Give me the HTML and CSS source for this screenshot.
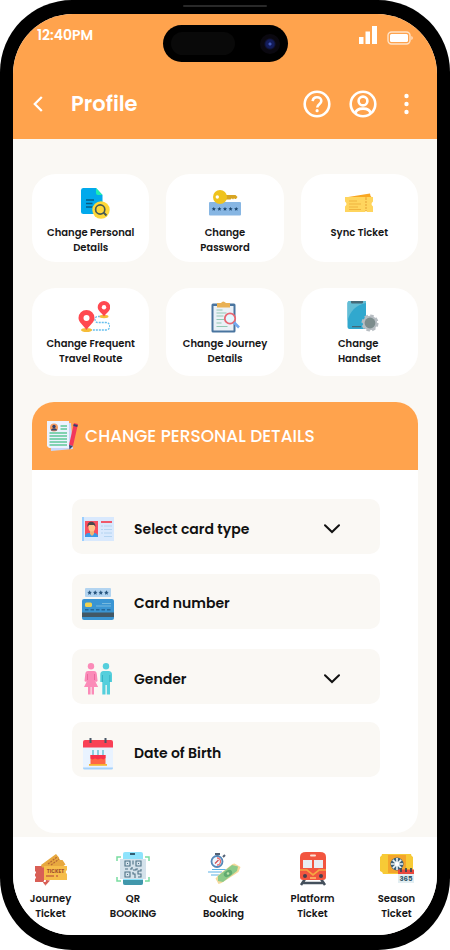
FILE: index.html
```html
<!DOCTYPE html>
<html lang="en">
<head>
<meta charset="utf-8">
<meta name="viewport" content="width=device-width, initial-scale=1">
<title>Profile</title>
<link rel="stylesheet" href="styles.css">
</head>
<body>
<div class="phone">
  <span class="speaker"></span>
  <div class="screen">
    <div class="island"><span class="sensor"></span><span class="lens"></span></div>
    <header class="header">
      <div class="status">
        <span class="time">12:40PM</span>
        <div class="signals">
          <svg width="18" height="19" viewBox="0 0 18 19" fill="#fff"><path d="M0 11h4.500v7H0zM6.500 5.500H11V18H6.500zM13 0h5v18h-5z"/></svg>
          <svg width="26" height="14" viewBox="0 0 26 14"><rect x="1" y="1" width="22" height="12" rx="3.500" fill="none" stroke="#ffe3c8" stroke-width="1.400"/><rect x="3" y="3" width="18" height="8" rx="1.500" fill="#fff"/><path d="M24.300 5v4q1.500-.6 1.500-2t-1.500-2z" fill="#ffe3c8"/></svg>
        </div>
      </div>
      <div class="appbar">
        <button class="icon-button" aria-label="Back"><svg width="10" height="16" viewBox="0 0 10 16" fill="none" stroke="#fff" stroke-width="2.300"><path d="M8.800 1 1.800 8l7 7"/></svg></button>
        <h1 class="title">Profile</h1>
        <div class="actions">
          <button class="icon-button" aria-label="Help"><svg width="28" height="28" viewBox="0 0 28 28" fill="none" stroke="#fff" stroke-width="2.600"><circle cx="14" cy="14" r="12.300"/><path d="M9.700 11.200c.2-2.400 1.900-3.900 4.300-3.900 2.500 0 4.300 1.500 4.300 3.700 0 3.200-4.100 3.200-4.100 6.600"/><circle cx="14.100" cy="20.700" r="1.600" fill="#fff" stroke="none"/></svg></button>
          <button class="icon-button" aria-label="Account"><svg width="28" height="28" viewBox="0 0 28 28" fill="none" stroke="#fff" stroke-width="2.600"><circle cx="14" cy="14" r="12.300"/><circle cx="14" cy="11" r="4.400"/><path d="M6.500 23.300c.4-3.400 3.300-4.700 7.500-4.700s7.100 1.300 7.500 4.700"/></svg></button>
          <button class="icon-button" aria-label="More"><svg width="5" height="22" viewBox="0 0 5 22" fill="#fff"><circle cx="2.500" cy="3" r="2.200"/><circle cx="2.500" cy="11" r="2.200"/><circle cx="2.500" cy="19" r="2.200"/></svg></button>
        </div>
      </div>
    </header>

    <main class="main">
      <div class="tiles">
        <button class="tile tile-shifted">
          <svg width="32" height="32" viewBox="0 0 32 32"><path d="M5 1h13l6.500 7v19H5.500Q3 27 3 24.500V3.500Q3 1 5 1z" fill="#02a9ec"/><path d="M18 1l6.500 7H20q-2 0-2-2z" fill="#20efb0"/><path d="M8 13h8M8 16.500h6.500M8 20h6.500" stroke="#065c87" stroke-width="1.300"/><circle cx="23" cy="23" r="8.700" fill="#ffd838"/><circle cx="22.200" cy="22.500" r="4.600" fill="none" stroke="#495b52" stroke-width="1.700"/><path d="M25.500 25.500l3 3" stroke="#495b52" stroke-width="2"/></svg>
          <span>Change Personal<br>Details</span>
        </button>
        <button class="tile">
          <svg width="32" height="32" viewBox="0 0 32 32"><rect y="15" width="32" height="13.500" rx="1" fill="#87b6e3"/><g fill="#1c4770"><path id="star" d="M4.800 19.800l.6 1.400 1.500.1-1.100 1 .3 1.500-1.300-.8-1.300.8.300-1.500-1.100-1 1.500-.1z"/><use href="#star" x="5.600"/><use href="#star" x="11.200"/><use href="#star" x="16.800"/><use href="#star" x="22.400"/></g><path d="M16 8h10.500l2 2-1.500 2h-1l-1-.8-1 1.300-1.200-1.300-1.200 1.300H16z" fill="#d8a522"/><circle cx="11" cy="10" r="7" fill="#efc31e"/><circle cx="8.300" cy="10" r="1.700" fill="#fff"/></svg>
          <span>Change<br>Password</span>
        </button>
        <button class="tile">
          <svg width="32" height="32" viewBox="0 0 32 32"><path d="M2 10.500l25-4q.2 2.500 1.500 3.500v3H3z" fill="#f9a722"/><path d="M2 10h20l1 1 1-1h6v4.500q-3 2.500 0 5V25h-6l-1-1-1 1H2v-5.500q3-2.500 0-5z" fill="#ffd55e"/><path d="M6 14h8M6 17h12M6 20h9M6 22.500h12" stroke="#f0b33e" stroke-width="1.200"/><path d="M23 11v13" stroke="#eaa83b" stroke-width="1.200" stroke-dasharray="2 1"/></svg>
          <span>Sync Ticket</span>
        </button>
        <button class="tile tile-tight tile-shifted">
          <svg width="32" height="32" viewBox="0 0 32 32"><path d="M25 15.500h-5c-4 0-4 6 0 6h8c5 0 5 7.500 0 7.500H12" fill="none" stroke="#65bfee" stroke-width="1.300" stroke-dasharray="2 1"/><ellipse cx="8.500" cy="29" rx="5.500" ry="2" fill="#f6bd38"/><ellipse cx="26" cy="15.500" rx="4.500" ry="1.700" fill="#f6bd38"/><path d="M8.500 29C5.500 24 .5 21.500.5 17a8 8 0 0 1 16 0c0 4.500-5 7-8 12z" fill="#ff4950"/><circle cx="8.500" cy="17" r="3" fill="#fff"/><path d="M26 15.500c-2-3.500-6.300-5.500-6.300-9.200a6.300 6.300 0 0 1 12.600 0c0 3.700-4.300 5.700-6.300 9.200z" fill="#ff4950"/><circle cx="26" cy="6.200" r="2.200" fill="#fff"/></svg>
          <span>Change Frequent<br>Travel Route</span>
        </button>
        <button class="tile tile-tight">
          <svg width="32" height="32" viewBox="0 0 32 32"><rect x="2.500" y="2.500" width="24" height="29" rx="1.500" fill="#49749f"/><path d="M4.500 5h20v24.500h-20z" fill="#eaf1f7"/><path d="M7.500 9h6M7.500 12h10M7.500 15h7M7.500 18.500h8M7.500 22h5M7.500 25.500h11" stroke="#91c8b3" stroke-width="1.200"/><path d="M8 2h4q2-3 5 0h4v4.500H8z" fill="#e9b155"/><circle cx="21" cy="17.500" r="5.200" fill="#e4f7ff" stroke="#e76772" stroke-width="1.800"/><path d="M25 21.500l5 5" stroke="#73a8ef" stroke-width="2.600"/></svg>
          <span>Change Journey<br>Details</span>
        </button>
        <button class="tile tile-tight tile-shifted">
          <svg width="32" height="32" viewBox="0 0 32 32"><rect x=".5" width="18.500" height="28" rx="2" fill="#31a8ce"/><path d="M.5 20V2q0-2 2-2H19v2C9 4 3 10 .5 20z" fill="#63bdd5"/><path d="M4 0h12v1.500q0 1-1 1H5q-1 0-1-1zM5 25h9v1.300H5z" fill="#456a78"/><circle cx="23" cy="22" r="7.300" fill="none" stroke="#b7bdc2" stroke-width="2.500" stroke-dasharray="3.500 2.230"/><circle cx="23" cy="22" r="7.300" fill="#b7bdc2"/><circle cx="23" cy="22" r="5.400" fill="#7c8c8c"/></svg>
          <span class="align-start">Change<br>Handset</span>
        </button>
      </div>

      <section class="panel">
        <div class="panel-head">
          <svg width="32" height="32" viewBox="0 0 32 32"><path d="M3 4l21-1 2 26-22 2z" fill="#c8d6f8"/><path d="M0 1h22v27H2l-2-2z" fill="#edf2ff"/><circle cx="7" cy="7.500" r="4" fill="#f49b63"/><path d="M4 10.500c0-3 6-3 6 0z" fill="#34426e"/><circle cx="7" cy="6.500" r="1.700" fill="#34426e"/><path d="M13.500 6H20M13.500 9H20M2.500 13H20M2.500 16H20M2.500 19H20M2.500 22H20M2.500 25H20" stroke="#5dc898" stroke-width="1.500"/><path d="M27 3l4 1-5 22-4-1z" fill="#f2375c"/><path d="M22 25l4 1-3.500 3.500z" fill="#34426e"/><path d="M26.500 5l4 1" stroke="#34426e" stroke-width="2"/></svg>
          <h2>CHANGE PERSONAL DETAILS</h2>
        </div>
        <form class="form">
          <div class="field">
            <svg width="32" height="32" viewBox="0 0 32 32"><path d="M0 4h32v24H0z" fill="#d9e9fd"/><path d="M0 4h2v24H0z" fill="#9bcfff"/><path d="M3 8h13v16H3z" fill="#f84e60"/><path d="M3 24q0-4 4-4h5q4 0 4 4z" fill="#379bea"/><path d="M8 16h4v5l-2 2-2-2z" fill="#f2b274"/><ellipse cx="9.800" cy="14" rx="3.400" ry="4.500" fill="#ffc58b"/><path d="M5.500 14c-1-7 8.500-7 8 0l-1.500-2H7z" fill="#4a474c"/><path d="M19 9h11" stroke="#ef596b" stroke-width="2"/><path d="M19 13h2m1 0h8M19 16.500h2m1 0h8M19 20h2m1 0h8M22 23.500h8" stroke="#b4d4f1"/></svg>
            <select class="control" aria-label="Select card type"><option>Select card type</option></select>
            <svg class="chevron" width="16" height="10" viewBox="0 0 16 10"><path d="M1 1.200l7 6.800 7-6.800"/></svg>
          </div>
          <div class="field">
            <svg width="32" height="32" viewBox="0 0 32 32"><rect x="3" y="0" width="26" height="9" rx="1" fill="#b3d4f0"/><g fill="#28557e"><path id="pinstar" d="M7.600 2.200l.7 1.500 1.600.2-1.200 1.100.3 1.700-1.400-.8-1.400.8.3-1.700-1.200-1.100 1.600-.2z"/><use href="#pinstar" x="5.600"/><use href="#pinstar" x="11.200"/><use href="#pinstar" x="16.800"/></g><rect y="11" width="32" height="21" rx="2" fill="#3a95d3"/><path d="M0 24.500h32v4.500H0z" fill="#425866"/><rect x="3" y="14.500" width="7" height="4.500" rx="1.500" fill="#f1d250"/><path d="M20 15.500h9M14 18h15" stroke="#76b9dd"/><path d="M3 21.700h26" stroke="#236798" stroke-width="1.500" stroke-dasharray="3.500 2"/></svg>
            <input class="control" type="text" aria-label="Card number" placeholder="Card number">
          </div>
          <div class="field">
            <svg width="32" height="32" viewBox="0 0 32 32"><g fill="#fb8bb8"><circle cx="9" cy="3.300" r="3.200"/><path d="M6 8h6q2.500 0 2.800 3l.8 7-1.500 1-1-1 3 6H12v7.500H9.600V24H8.600v7.500H6V24H2l3-6-1 1-1.500-1 .8-7Q3.500 8 6 8z"/></g><g fill="#55cfdc"><circle cx="24" cy="3.300" r="3.200"/><path d="M21.500 8h5q3.500 0 3.500 3.500V19h-2v12.500h-3.200V22h-1.300v9.500h-3.200V19h-2v-7.500Q18.300 8 21.500 8z"/></g><path d="M5.500 11v6M12.500 11v6" stroke="#e96b9e"/><path d="M20.500 12v7M27.800 12v7" stroke="#36b4c4"/></svg>
            <select class="control" aria-label="Gender"><option>Gender</option></select>
            <svg class="chevron" width="16" height="10" viewBox="0 0 16 10"><path d="M1 1.200l7 6.800 7-6.800"/></svg>
          </div>
          <div class="field field-low">
            <svg width="32" height="32" viewBox="0 0 32 32"><path d="M1 8h30v21q0 2-2 2H3q-2 0-2-2z" fill="#e9f3ff"/><path d="M1 29.500h30v.5q0 1.500-1.500 1.500h-27Q1 31.500 1 30z" fill="#a6d2fb"/><path d="M1 9.500V4q0-2 2-2h26q2 0 2 2v5.500z" fill="#f94056"/><path d="M8.500 0v5M23.500 0v5" stroke="#475565" stroke-width="2"/><path d="M11 12v5M16 12v5M21 12v5" stroke="#7cc8db" stroke-width="1.700"/><path d="M8.500 17h15v9h-15z" fill="#ff6745"/><path d="M8.500 17h15v3l-2 1.500-2.500-1-3 1-3-1-2.500 1-2-1z" fill="#f7314b"/><path d="M7 26h18v1.800H7z" fill="#f6b52f"/></svg>
            <input class="control" type="text" aria-label="Date of Birth" placeholder="Date of Birth">
          </div>
        </form>
      </section>
    </main>

    <nav class="nav">
      <a class="nav-item" href="#journey">
        <svg width="34" height="34" viewBox="0 0 34 34"><path d="M1 14h9v15l-1 1.500L11 33l3-3H1v-3q2-1.500 0-3v-2q2-1.500 0-3z" fill="#d95f56"/><path d="M7 13L22 2l3 3.500q0 3 3.500 2.500l3 4.500-4 3H8z" fill="#e7a83f"/><path d="M10 14h23v4q-2.500 2 0 4v6H10z" fill="#f6bd4a"/><path d="M12 28l-1 6 5-5.500z" fill="#d95f56"/><text x="21.500" y="20.500" class="ticket-word">TICKET</text><path d="M12 24h8M22 24h2" stroke="#c9683f" stroke-width="1.500"/><path d="M14 12l9-7M17 13l8-6" stroke="#b86a35" stroke-width="1.200" stroke-dasharray="2 1"/></svg>
        <span>Journey<br>Ticket</span>
      </a>
      <a class="nav-item" href="#qr">
        <svg width="34" height="34" viewBox="0 0 34 34"><rect x="7" y="0" width="20" height="33" rx="2" fill="#8ee3fc"/><path d="M7 28h20v3q0 2-2 2H9q-2 0-2-2z" fill="#4197ab"/><path d="M14 1h5v2h-5z" fill="#315d72"/><path d="M4 7h26v20H4z" fill="#d4e2eb"/><path d="M1 9V5h4M29 5h4v4M33 25v4h-4M5 29H1v-4" fill="none" stroke="#79dda0" stroke-width="1.500"/><path d="M9 9h5v5H9zM20 9h5v5h-5zM9 20h5v5H9zM17 8.500v4M9 17h3M14 17h2v-2M17 20v2h2v4M17 18h3v-1h2M25 17v2h-3v3h3v3h-3" fill="none" stroke="#4c7185" stroke-width="1.100"/><path d="M11 11h1v1h-1zM22 11h1v1h-1zM11 22h1v1h-1z" fill="#4c7185"/></svg>
        <span>QR<br>BOOKING</span>
      </a>
      <a class="nav-item" href="#quick">
        <svg width="34" height="34" viewBox="0 0 34 34"><path d="M8 2h5M10.500 2v4M16 5l2-2" stroke="#536174" stroke-width="2"/><circle cx="10" cy="9.500" r="5.500" fill="#eff8ff" stroke="#5688b9" stroke-width="1.800"/><path d="M10 6a3.500 3.500 0 0 1 0 7" fill="none" stroke="#ef6a68" stroke-width="1.300"/><path d="M8 11.500l3.500-3.500" stroke="#d44d53" stroke-width="1.300"/><path d="M5 17.500h15M1 20h14M4 23h8" stroke="#5db2e5" stroke-width="1.200"/><path d="M8.500 26.500l3 5.500 3-1 17-11 2-5-6-3.500-2 .5-14 11z" fill="#f5d99a"/><path d="M11 24l14-11 6 1.500-1 4.500-14 11-5-1z" fill="#8cca89"/><ellipse cx="21" cy="21.500" rx="4.500" ry="3" transform="rotate(-30 21 21.500)" fill="#62ab71"/><circle cx="21" cy="21.500" r="1.300" fill="#bde2a9"/></svg>
        <span>Quick<br>Booking</span>
      </a>
      <a class="nav-item" href="#platform">
        <svg width="34" height="34" viewBox="0 0 34 34"><path d="M9 27l-4 6M25 27l4 6M7 31h20" stroke="#44505c" stroke-width="2.500"/><path d="M4 5q0-5 6-5h14q6 0 6 5v20q0 3-3 3H7q-3 0-3-3z" fill="#f2553f"/><rect x="14" y="2.500" width="6" height="2" rx="1" fill="#fbe2d5"/><path d="M7 8h9v8H7zM18 8h9v8h-9z" fill="#e8edf2"/><path d="M4 18h7l6 5 6-5h7" fill="none" stroke="#f5a741" stroke-width="1.700"/><circle cx="9" cy="24" r="2" fill="#46404e"/><circle cx="25" cy="24" r="2" fill="#46404e"/><path d="M14 26h6" stroke="#ffc169" stroke-width="1.500"/></svg>
        <span>Platform<br>Ticket</span>
      </a>
      <a class="nav-item" href="#season">
        <svg width="34" height="34" viewBox="0 0 34 34"><path d="M2 2h29q0 2 2 3v14q-2 1-2 3H3q0-2-3-3V5q2-1 2-3z" fill="#f7ca36"/><path d="M8 3h18v18H8z" fill="#f4a52b"/><circle cx="17" cy="12" r="6.500" fill="#3d617b"/><path d="M17 6v12M11 12h12M12.800 7.800l8.400 8.400M21.200 7.800l-8.400 8.400" stroke="#e9f3f5" stroke-width="1.700"/><circle cx="17" cy="12" r="2" fill="#fff"/><path d="M18 21h16v10H18z" fill="#e2eef2"/><path d="M18 17.500h16V22H18z" fill="#e9483e"/><path d="M21 16v4M26 16v4M31 16v4" stroke="#354655" stroke-width="1.700"/><text x="26" y="29" class="days-word">365</text></svg>
        <span>Season<br>Ticket</span>
      </a>
    </nav>
  </div>
</div>
</body>
</html>
```
FILE: styles.css
```css
* { box-sizing: border-box; }

body {
  margin: 0;
  background: #fff;
  color: #161616;
  font-family: Poppins, Inter, "Open Sans", sans-serif;
}

button, input, select { font: inherit; color: inherit; }

.phone {
  position: relative;
  display: flex;
  min-height: 100vh;
  padding: 14px 13px 15px;
  background: #000;
  border-radius: 72px;
}

.speaker {
  position: absolute;
  top: 5px;
  left: 50%;
  width: 84px;
  height: 2px;
  margin-left: -42px;
  background: #292929;
  border-radius: 2px;
}

.screen {
  position: relative;
  display: flex;
  flex: 1;
  flex-direction: column;
  min-width: 0;
  overflow: hidden;
  background: #faf8f4;
  border-radius: 60px;
}

.island {
  position: absolute;
  top: 11px;
  left: 50%;
  display: flex;
  align-items: center;
  justify-content: space-between;
  width: 125px;
  height: 37px;
  margin-left: -62px;
  padding: 0 8px;
  background: #000;
  border-radius: 20px;
}

.sensor {
  width: 64px;
  height: 23px;
  background: #090909;
  border-radius: 12px;
}

.lens {
  width: 20px;
  height: 20px;
  background: radial-gradient(circle, #4058b8 0 1px, #131c5c 2px 4px, #0a0810 6px);
  border-radius: 50%;
}

.header {
  display: flex;
  flex-direction: column;
  background: #ffa34d;
  color: #fff;
}

.status {
  display: flex;
  align-items: center;
  justify-content: space-between;
  height: 42px;
  padding: 0 24px;
}

.time { font-size: 14px; font-weight: 600; }

.signals { display: flex; align-items: flex-end; gap: 10px; }

.appbar {
  display: flex;
  align-items: center;
  height: 83px;
  padding: 13px 28px 0 20px;
}

.icon-button {
  display: flex;
  padding: 0;
  background: none;
  border: 0;
}

.title {
  margin: 0 0 0 28px;
  font-size: 21px;
  font-weight: 600;
  line-height: 28px;
}

.actions { display: flex; align-items: center; gap: 18px; margin-left: auto; }
.actions .icon-button:last-child { margin-left: 9px; }

.main { flex: 1; padding: 35px 19px 3px; }

.tiles {
  display: grid;
  grid-template-columns: repeat(3, minmax(0, 1fr));
  gap: 26px 17px;
}

.tile {
  display: flex;
  flex-direction: column;
  align-items: center;
  gap: 6px;
  height: 88px;
  padding: 13px 0 0;
  background: #fff;
  border: 0;
  border-radius: 24px;
  font-size: 10px;
  font-weight: 600;
  line-height: 15px;
  white-space: nowrap;
}

.tile-tight { gap: 3px; }
.tile-shifted svg { margin-left: 7px; }
.align-start { text-align: left; }

.panel {
  margin-top: 26px;
  overflow: hidden;
  background: #fff;
  border-radius: 22px;
}

.panel-head {
  display: flex;
  align-items: center;
  gap: 6px;
  height: 68px;
  padding: 0 15px;
  background: #ffa34d;
  color: #fff;
}

.panel-head h2 { margin: 0; font-size: 17px; font-weight: 500; }

.form {
  display: flex;
  flex-direction: column;
  gap: 20px;
  padding: 29px 38px 56px 40px;
}

.field {
  display: flex;
  align-items: center;
  gap: 20px;
  height: 55px;
  padding: 4px 40px 0 10px;
  background: #faf8f4;
  border-radius: 10px;
}

.field-low { margin-top: -2px; padding-top: 8px; }

.control {
  flex: 1;
  min-width: 0;
  height: 32px;
  padding: 0;
  background: transparent;
  border: 0;
  appearance: none;
  color: #111;
  font-size: 14px;
  font-weight: 600;
}

.control::placeholder { color: #111; opacity: 1; }

.chevron { fill: none; stroke: #111; stroke-width: 2; stroke-linecap: round; }

.nav {
  display: grid;
  grid-template-columns: 75fr 90fr 91fr 87fr 81fr;
  height: 98px;
  padding-top: 15px;
  background: #fff;
}

.nav-item {
  display: flex;
  flex-direction: column;
  align-items: center;
  gap: 5px;
  color: inherit;
  font-size: 10px;
  font-weight: 600;
  line-height: 15px;
  text-align: center;
  text-decoration: none;
}

.ticket-word, .days-word { font-weight: 700; text-anchor: middle; }
.ticket-word { fill: #a4502d; font-size: 5px; }
.days-word { fill: #36586b; font-size: 7px; }
```
